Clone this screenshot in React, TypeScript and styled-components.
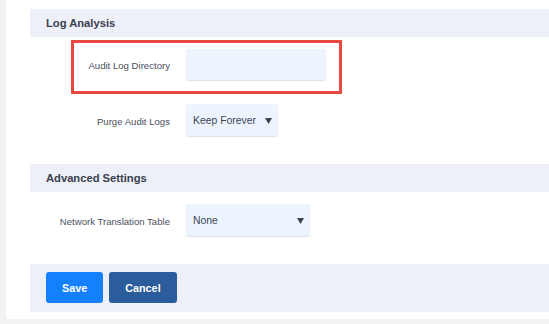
import React from "react";
import styled, { createGlobalStyle } from "styled-components";

const GlobalStyle = createGlobalStyle`
  html, body {
    margin: 0;
    padding: 0;
    background: #f2f2f2;
    overflow: hidden;
    font-family: "Liberation Sans", Arial, sans-serif;
  }
`;

const Page = styled.div`
  width: 549px;
  height: 324px;
  padding-left: 6px;
  box-sizing: border-box;
  overflow: hidden;
`;

const Card = styled.div`
  background: #ffffff;
  width: 600px;
  padding: 9px 0 7px 24px;
  border-radius: 0 0 3px 3px;
`;

const SectionHeader = styled.div`
  height: 28px;
  display: flex;
  align-items: center;
  padding-left: 16px;
  background: #edf0f8;
  color: #3a3f4e;
  font-size: 11.2px;
  font-weight: 700;
`;

const SectionBody = styled.div`
  display: flex;
  flex-direction: column;
  gap: 24px;
  padding: 12px 0 28px;
`;

const Row = styled.div`
  position: relative;
  display: grid;
  grid-template-columns: 140px auto;
  column-gap: 16px;
  align-items: center;
  justify-items: start;
`;

const Label = styled.label`
  justify-self: end;
  font-size: 9.6px;
  color: #4a5060;
  padding-top: 2px;
`;

const Input = styled.div`
  width: 140px;
  height: 31px;
  border-radius: 3px;
  background: #edf4fe;
  box-shadow: 0 1px 1px rgba(60, 80, 120, 0.18);
`;

const Select = styled.div<{ $width: number }>`
  width: ${p => p.$width}px;
  height: 32px;
  box-sizing: border-box;
  padding: 0 6px 0 7px;
  display: flex;
  align-items: center;
  justify-content: space-between;
  border-radius: 3px;
  background: #edf4fe;
  box-shadow: 0 1px 1px rgba(60, 80, 120, 0.18);
  font-size: 10.4px;
  color: #3e4454;
`;

const Highlight = styled.div`
  position: absolute;
  left: 41px;
  top: -9px;
  width: 271px;
  height: 54px;
  box-sizing: border-box;
  border: 3px solid #e8463e;
  pointer-events: none;
`;

const Footer = styled.div`
  height: 48px;
  box-sizing: border-box;
  padding: 8px 16px 9px;
  display: flex;
  gap: 6px;
  background: #edf0f8;
`;

const Button = styled.button<{ $variant: "primary" | "secondary" }>`
  height: 31px;
  padding: 0 16px;
  border: none;
  border-radius: 3px;
  background: ${p => (p.$variant === "primary" ? "#1580fb" : "#2b5d9c")};
  color: #ffffff;
  font-family: "Liberation Sans", Arial, sans-serif;
  font-size: 10.8px;
  font-weight: 700;
`;

const Caret = () => (
  <svg width="7" height="7" viewBox="0 0 7 7">
    <path d="M0 1h7L3.5 7z" fill="#3b4152" />
  </svg>
);

export default function App() {
  return (
    <Page>
      <GlobalStyle />
      <Card>
        <SectionHeader>Log Analysis</SectionHeader>
        <SectionBody>
          <Row>
            <Label>Audit Log Directory</Label>
            <Input />
            <Highlight />
          </Row>
          <Row>
            <Label>Purge Audit Logs</Label>
            <Select $width={92}>
              <span>Keep Forever</span>
              <Caret />
            </Select>
          </Row>
        </SectionBody>
        <SectionHeader>Advanced Settings</SectionHeader>
        <SectionBody>
          <Row>
            <Label>Network Translation Table</Label>
            <Select $width={124}>
              <span>None</span>
              <Caret />
            </Select>
          </Row>
        </SectionBody>
        <Footer>
          <Button $variant="primary">Save</Button>
          <Button $variant="secondary">Cancel</Button>
        </Footer>
      </Card>
    </Page>
  );
}
